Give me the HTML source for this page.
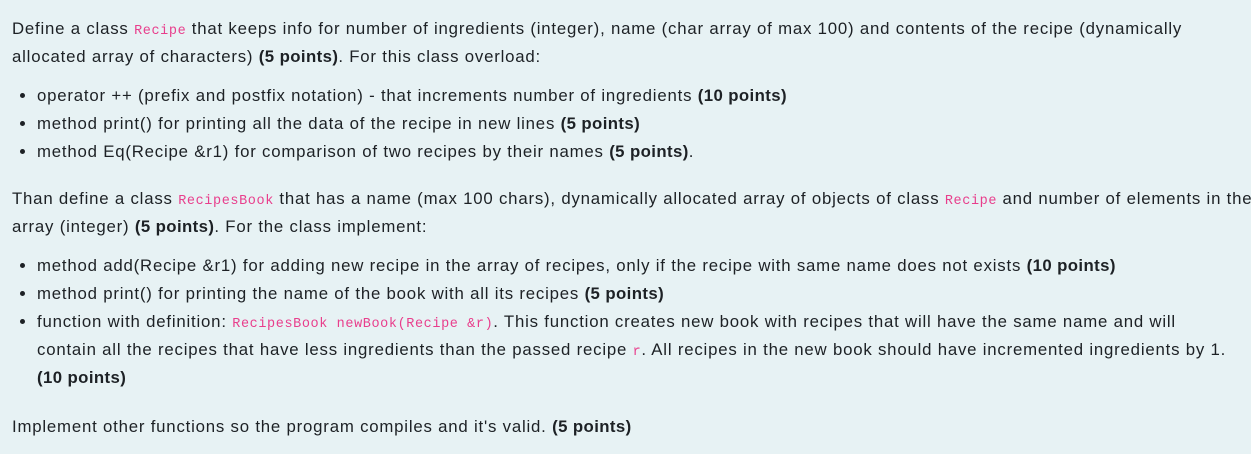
<!DOCTYPE html>
<html><head><meta charset="utf-8"><style>
html,body{margin:0;padding:0;background:#e7f2f4;width:1251px;height:439px;overflow:hidden}
body{font-family:"Liberation Sans",sans-serif;font-size:16.8px;letter-spacing:0.8px;color:#1d2125;line-height:28px;padding:15px 0 0 12px;white-space:nowrap}
p{margin:0}
ul{margin:11px 0 19px 0;padding-left:25px}
ul.last{margin-bottom:20px}
li{margin:0;height:28px}
li.tall{height:85px}
code{font-family:"Liberation Mono",monospace;font-size:13.5px;letter-spacing:0.6px;color:#e83e8c;line-height:1}
b{font-weight:bold;letter-spacing:0.4px}
</style></head><body>
<p>Define a class <code>Recipe</code> that keeps info for number of ingredients (integer), name (char array of max 100) and contents of the recipe (dynamically<br>allocated array of characters) <b>(5 points)</b>. For this class overload:</p>
<ul>
<li>operator ++ (prefix and postfix notation) - that increments number of ingredients <b>(10 points)</b></li>
<li>method print() for printing all the data of the recipe in new lines <b>(5 points)</b></li>
<li>method Eq(Recipe &amp;r1) for comparison of two recipes by their names <b>(5 points)</b>.</li>
</ul>
<p>Than define a class <code>RecipesBook</code> that has a name (max 100 chars), dynamically allocated array of objects of class <code>Recipe</code> and number of elements in the<br>array (integer) <b>(5 points)</b>. For the class implement:</p>
<ul class="last">
<li>method add(Recipe &amp;r1) for adding new recipe in the array of recipes, only if the recipe with same name does not exists <b>(10 points)</b></li>
<li>method print() for printing the name of the book with all its recipes <b>(5 points)</b></li>
<li class="tall">function with definition: <code>RecipesBook newBook(Recipe &amp;r)</code>. This function creates new book with recipes that will have the same name and will<br>contain all the recipes that have less ingredients than the passed recipe <code>r</code>. All recipes in the new book should have incremented ingredients by 1.<br><b>(10 points)</b></li>
</ul>
<p>Implement other functions so the program compiles and it's valid. <b>(5 points)</b></p>
</body></html>
